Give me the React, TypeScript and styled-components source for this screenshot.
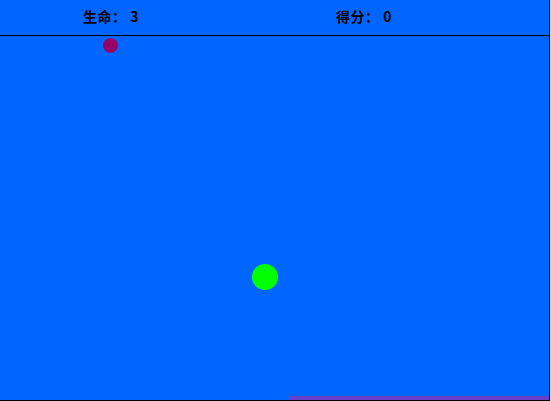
import React from 'react';
import styled, { createGlobalStyle } from 'styled-components';

const GlobalStyle = createGlobalStyle`
    html, body {
        margin: 0;
        padding: 0;
        background: #d4d0c8;
    }
`;

const Board = styled.div`
    position: relative;
    width: 549px;
    height: 400px;
    background: #0066ff;
    border-right: 1px solid #000000;
    border-bottom: 1px solid #000000;
    overflow: hidden;
`;

const Header = styled.div`
    display: flex;
    align-items: center;
    height: 35px;
    padding-left: 83px;
    border-bottom: 1px solid #000000;
    box-sizing: content-box;
`;

const Stat = styled.span`
    flex: 0 0 253px;
    font-family: 'Noto Sans CJK SC', 'DejaVu Sans', sans-serif;
    font-weight: 700;
    font-size: 14px;
    line-height: 16px;
    margin-top: -3px;
    letter-spacing: 0.5px;
    color: #000000;
    white-space: nowrap;
`;

interface IBall {
    x: number;
    y: number;
    size: number;
    color: string;
}

const Ball = styled.div<{ $size: number; $color: string }>`
    position: absolute;
    width: ${(p) => p.$size}px;
    height: ${(p) => p.$size}px;
    border-radius: 50%;
    background: ${(p) => p.$color};
`;

const Paddle = styled.div`
    position: absolute;
    left: 289px;
    bottom: 0;
    width: 260px;
    height: 4px;
    background: #6640cc;
`;

const balls: IBall[] = [
    { x: 103, y: 38, size: 15, color: '#990066' },
    { x: 252, y: 264, size: 26, color: '#00ff00' },
];

const App: React.FC = () => {
    const lives = 3;
    const score = 0;
    return (
        <>
            <GlobalStyle />
            <Board>
                <Header>
                    <Stat>生命： {lives}</Stat>
                    <Stat>得分： {score}</Stat>
                </Header>
                {balls.map((b, i) => (
                    <Ball
                        key={i}
                        $size={b.size}
                        $color={b.color}
                        style={{ left: b.x, top: b.y }}
                    />
                ))}
                <Paddle />
            </Board>
        </>
    );
};

export default App;
